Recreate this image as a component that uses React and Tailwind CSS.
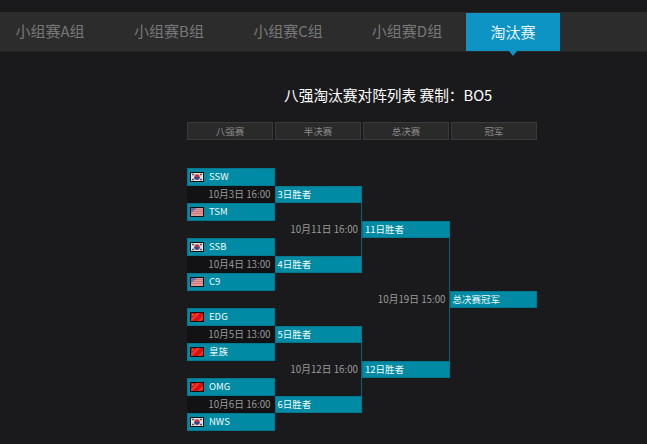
const tabs = ['小组赛A组', '小组赛B组', '小组赛C组', '小组赛D组'];
const heads = ['八强赛', '半决赛', '总决赛', '冠军'];

const KoreaFlag = () => (
  <svg width="14" height="10" viewBox="0 0 14 10" className="shrink-0">
    <rect width="14" height="10" fill="#101012" />
    <rect x="1" y="1" width="12" height="8" fill="#e4e4e4" />
    <path d="M2 2.5h2.2M2 7.5h2.2M9.8 2.5h2.2M9.8 7.5h2.2" stroke="#555" strokeWidth="1.5" />
    <circle cx="7" cy="5" r="2.7" fill="#c8323f" />
    <path d="M4.3 5a2.7 2.7 0 0 0 5.4 0z" fill="#2c4796" />
  </svg>
);

const UsaFlag = () => (
  <svg width="14" height="10" viewBox="0 0 14 10" className="shrink-0">
    <rect width="14" height="10" fill="#101012" />
    <rect x="1" y="1" width="12" height="8" fill="#e09a98" />
    <path d="M1 2.5h12M1 4.5h12M1 6.5h12" stroke="#c9706f" strokeWidth="0.8" />
    <path d="M1 1h5.5L1 6z" fill="#6a6fb0" />
  </svg>
);

const ChinaFlag = () => (
  <svg width="14" height="10" viewBox="0 0 14 10" className="shrink-0">
    <rect width="14" height="10" fill="#101012" />
    <rect x="1" y="1" width="12" height="8" fill="#d81210" />
    <path d="M1 7L7 1h3L2 9H1zM13 4L8 9h2.5L13 6.5z" fill="#f2392e" />
    <rect x="2" y="2" width="1.5" height="1.5" fill="#e8701a" />
  </svg>
);

const Team = ({ name, flag: Flag, row }) => (
  <div className={`col-start-1 ${row} flex items-center gap-[5px] bg-[#008aa3] border border-[#007990] pl-[2px] text-[9.5px] text-[#f2fafb]`}>
    <Flag />
    <span className="mb-[2px]">{name}</span>
  </div>
);

const Winner = ({ label, col, row }) => (
  <div className={`${col} ${row} flex items-center bg-[#008aa3] border border-[#007990] pl-[2px] text-[9.5px] text-[#f2fafb]`}>
    {label}
  </div>
);

const MatchTime = ({ label, col, row, dark }) => (
  <div className={`${col} ${row} flex items-center justify-end pr-[4px] text-[9.75px] text-[#9a9a9a] ${dark ? 'bg-[#121214]' : ''}`}>
    {label}
  </div>
);

const Link = ({ col, row }) => (
  <div className={`${col} ${row} border-r border-[#0e6074]`} />
);

export default function App() {
  return (
    <div className="w-[647px] h-[444px] overflow-hidden bg-[#1a1a1c] pt-3 font-['Noto_Sans_CJK_SC','Liberation_Sans',sans-serif]">
      <div className="flex h-10 bg-[#2c2c2c] border-b border-[#262626]">
        {tabs.map((t) => (
          <div key={t} className="w-[119px] pr-[19px] flex items-center justify-center text-[15px] text-[#787878]">{t}</div>
        ))}
        <div className="relative w-[94px] ml-[-10px] mt-[1px] flex items-center justify-center bg-[#0d93c4] text-[15px] text-[#e8f6fb]">
          淘汰赛
          <div className="absolute top-full left-[43px] border-x-[4px] border-x-transparent border-t-[5px] border-t-[#0d93c4]" />
        </div>
      </div>

      <div className="ml-[187px] w-[350px]">
        <h1 className="mt-[27px] ml-[97px] h-[32px] text-[14.7px] leading-[32px] text-white">八强淘汰赛对阵列表 赛制：BO5</h1>

        <div className="mt-[11px] flex gap-[2px]">
          {heads.map((h) => (
            <div key={h} className="w-[86px] h-[18px] flex items-center justify-center bg-[#2a2a2a] border border-[#3a3a3a] text-[9.5px] text-[#8a8a8a]">{h}</div>
          ))}
        </div>

        <div className="mt-[28px] grid grid-cols-[87.5px_87.5px_87.5px_87.5px] grid-rows-[repeat(15,17.5px)]">
          <Team name="SSW" flag={KoreaFlag} row="row-start-1" />
          <MatchTime dark label="10月3日 16:00" col="col-start-1" row="row-start-2" />
          <Team name="TSM" flag={UsaFlag} row="row-start-3" />
          <Team name="SSB" flag={KoreaFlag} row="row-start-5" />
          <MatchTime dark label="10月4日 13:00" col="col-start-1" row="row-start-6" />
          <Team name="C9" flag={UsaFlag} row="row-start-7" />
          <Team name="EDG" flag={ChinaFlag} row="row-start-9" />
          <MatchTime dark label="10月5日 13:00" col="col-start-1" row="row-start-10" />
          <Team name="皇族" flag={ChinaFlag} row="row-start-11" />
          <Team name="OMG" flag={ChinaFlag} row="row-start-13" />
          <MatchTime dark label="10月6日 16:00" col="col-start-1" row="row-start-14" />
          <Team name="NWS" flag={KoreaFlag} row="row-start-15" />

          <Winner label="3日胜者" col="col-start-2" row="row-start-2" />
          <Winner label="4日胜者" col="col-start-2" row="row-start-6" />
          <Winner label="5日胜者" col="col-start-2" row="row-start-10" />
          <Winner label="6日胜者" col="col-start-2" row="row-start-14" />
          <Link col="col-start-2" row="row-start-3 row-span-3" />
          <Link col="col-start-2" row="row-start-11 row-span-3" />
          <MatchTime label="10月11日 16:00" col="col-start-2" row="row-start-4" />
          <MatchTime label="10月12日 16:00" col="col-start-2" row="row-start-12" />

          <Winner label="11日胜者" col="col-start-3" row="row-start-4" />
          <Winner label="12日胜者" col="col-start-3" row="row-start-12" />
          <Link col="col-start-3" row="row-start-5 row-span-7" />
          <MatchTime label="10月19日 15:00" col="col-start-3" row="row-start-8" />

          <Winner label="总决赛冠军" col="col-start-4" row="row-start-8" />
        </div>
      </div>
    </div>
  );
}
